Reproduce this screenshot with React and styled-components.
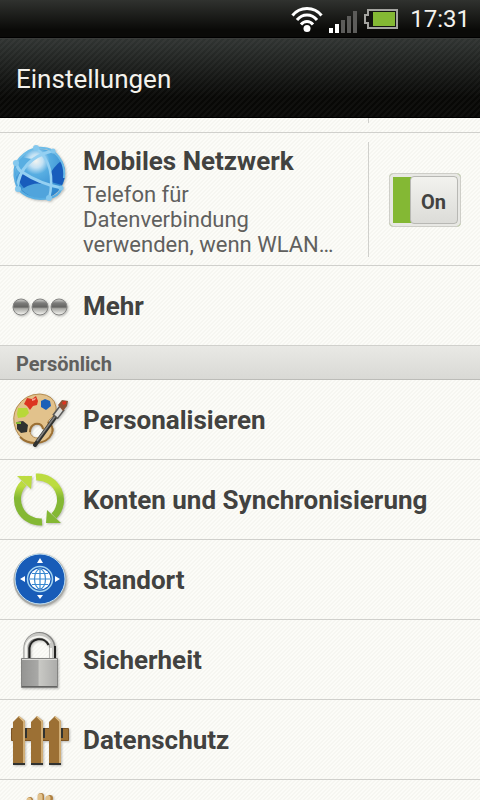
import React, { useState } from 'react';
import styled, { createGlobalStyle } from 'styled-components';

const GlobalStyle = createGlobalStyle`
  * {
    box-sizing: border-box;
  }
  body {
    margin: 0;
    background: #fbfbf7;
    font-family: Roboto, sans-serif;
  }
`;

const Screen = styled.div`
  display: flex;
  flex-direction: column;
  height: 100vh;
  overflow: hidden;
  color: #424240;
  background: linear-gradient(135deg, #fcfcf8 25%, #f6f6f1 25% 50%, #fcfcf8 50% 75%, #f6f6f1 75%);
  background-size: 4px 4px;
`;

const StatusBar = styled.div`
  display: flex;
  flex: none;
  align-items: center;
  justify-content: flex-end;
  gap: 6px;
  height: 38px;
  padding: 0 10px;
  background: linear-gradient(#30322f, #0a0a08 80%);
  border-bottom: 1px solid #000;
`;

const Clock = styled.time`
  margin-left: 6px;
  font-size: 24px;
  line-height: 38px;
  color: #f4f2ec;
`;

const Header = styled.header`
  flex: none;
  height: 80px;
  padding: 0 16px;
  border-top: 1px solid #3a3c3a;
  border-bottom: 1px solid #000;
  background:
    linear-gradient(135deg, transparent 25%, #ffffff08 25% 50%, transparent 50% 75%, #ffffff08 75%) 0 0 / 6px 6px,
    linear-gradient(#303432, #080806 75%);
`;

const PageTitle = styled.h1`
  margin: 0;
  font-size: 26px;
  font-weight: 400;
  line-height: 80px;
  color: #f4f2ec;
`;

const List = styled.ul`
  margin: 0;
  padding: 0;
  list-style: none;
`;

const Item = styled.li`
  display: flex;
  border-bottom: 1px solid #d0d0cc;
`;

// bottom edge of the row that is scrolled under the header
const ScrolledItem = styled(Item)`
  justify-content: flex-end;
  height: 15px;
  padding: 0 111px 9px 0;

  &::before {
    content: '';
    width: 1px;
    background: #d0d0cc;
  }
`;

const ItemLink = styled.a`
  display: flex;
  flex: 1;
  gap: 15px;
  align-items: ${(props) => (props.$tall ? 'flex-start' : 'center')};
  min-width: 0;
  padding: ${(props) => (props.$tall ? '12px 12px 8px' : '12px 12px 11px')};
  color: inherit;
  text-decoration: none;
`;

const Icon = styled.svg`
  flex: none;
  width: 56px;
  height: 56px;
  overflow: visible;
  filter: drop-shadow(1px 1px 1px #00000040);
`;

const ItemTitle = styled.div`
  font-size: 26px;
  font-weight: 700;
  line-height: 32px;
`;

const ItemText = styled.div`
  margin-top: 5px;
  font-size: 22px;
  line-height: 25px;
  color: #60605e;
`;

const SectionTitle = styled.h2`
  height: 34px;
  margin: 0;
  padding: 0 16px;
  border-bottom: 1px solid #bcbcb8;
  background: linear-gradient(#e9e9e5, #d9d9d5);
  font-size: 20px;
  font-weight: 700;
  line-height: 36px;
  color: #60605e;
`;

const SwitchCell = styled.div`
  display: flex;
  align-items: center;
  justify-content: center;
  width: 112px;
  margin: 9px 0 8px;
  border-left: 1px solid #d0d0cc;
`;

const Switch = styled.label`
  position: relative;
  display: flex;
  justify-content: ${(props) => (props.$on ? 'flex-end' : 'flex-start')};
  width: 72px;
  height: 54px;
  padding: 2px;
  border: 1px solid #cecec8;
  border-radius: 4px;
  background: ${(props) => (props.$on ? '#84b834' : '#c8c8c4')};
  box-shadow: inset 0 0 0 3px #e8e8e4;
`;

const SwitchInput = styled.input`
  position: absolute;
  inset: 0;
  width: 100%;
  height: 100%;
  margin: 0;
  opacity: 0;
`;

const SwitchKnob = styled.span`
  width: 48px;
  border: 1px solid #b8b8b4;
  border-radius: 4px;
  background: linear-gradient(#f2f2ee, #dcdcd8);
  font-size: 20px;
  font-weight: 700;
  line-height: 50px;
  text-align: center;
`;

const WifiIcon = () => (
  <svg width="32" height="26" viewBox="0 0 32 26" fill="none" stroke="#fff" strokeWidth="3">
    <path d="M1.5 9.5Q7 2.500 16 2.500T30.500 9.500" />
    <path d="M6 14Q10 9 16 9T26 14" />
    <path d="M10 18.500Q12.500 15.500 16 15.500T22 18.500" />
    <circle cx="16" cy="22.500" r="3.500" fill="#fff" stroke="none" />
  </svg>
);

const SignalIcon = () => (
  <svg width="29" height="28" viewBox="0 0 29 28">
    <path fill="#fff" d="M0 23h4v5H0zM6 19h4v9H6z" />
    <path fill="#5c5c5a" d="M12 15h4v13h-4zM18 11h4v17h-4zM24 6h4v22h-4z" />
  </svg>
);

const BatteryIcon = () => (
  <svg width="34" height="20" viewBox="0 0 34 20">
    <path fill="#141412" stroke="#a4a4a0" strokeWidth="2" d="M4 1h29v18H4v-5H1V6h3z" />
    <path fill="#84b834" d="M9 3h22v14H9z" />
  </svg>
);

const GlobeIcon = () => (
  <Icon viewBox="0 0 56 56">
    <defs>
      <radialGradient id="globe" cx="42%" cy="24%" r="75%">
        <stop offset="0" stopColor="#f4f4f0" />
        <stop offset="0.18" stopColor="#c4e2f4" />
        <stop offset="0.36" stopColor="#58aee2" />
        <stop offset="1" stopColor="#2c84cc" />
      </radialGradient>
    </defs>
    <circle cx="28" cy="29" r="25" fill="url(#globe)" />
    <path fill="#185cbc" d="M39 27Q46 17 50 16Q56 28 50 40L39 37zM8 27L30 39Q22 44 14 45Q3 35 8 27z" />
    <path fill="#50a4dc" d="M12 43Q24 35 38 41L37 54Q20 56 9 44z" />
    <path fill="#58aee2" d="M8 12Q3 20 4 32L12 22L20 14z" />
    <g fill="none" stroke="#94d0f2" strokeWidth="3">
      <path d="M5 44Q8 14 40 6" />
      <path d="M4 18Q6 25 10 27Q28 39 50 43" />
      <path d="M24 3Q45 20 37 54" strokeWidth="2.500" />
      <path d="M4 18Q11 7 24 3Q34 2 41 6Q54 17 52 33" stroke="#6cbce8" strokeWidth="2" />
      <path d="M4 18Q0 30 6 44Q18 57 37 53Q46 52 50 43" stroke="#58aee2" strokeWidth="2" />
    </g>
    <g fill="#84c8ee">
      <circle cx="24" cy="3" r="3" />
      <circle cx="4" cy="18" r="3" />
      <circle cx="6" cy="44" r="3" />
      <circle cx="37" cy="53" r="3" />
      <circle cx="49" cy="43" r="2.500" />
      <circle cx="41" cy="6" r="2.500" />
    </g>
  </Icon>
);

const MoreIcon = () => (
  <Icon viewBox="0 0 56 56">
    <defs>
      <linearGradient id="ball" x2="0" y2="1">
        <stop offset="0" stopColor="#dcdcd8" />
        <stop offset="0.25" stopColor="#7c7c7a" />
        <stop offset="0.5" stopColor="#646462" />
        <stop offset="0.6" stopColor="#a8a8a4" />
        <stop offset="1" stopColor="#fafaf6" />
      </linearGradient>
    </defs>
    <g fill="url(#ball)" stroke="#848482">
      <circle cx="9" cy="29" r="8" />
      <circle cx="28" cy="29" r="8" />
      <circle cx="47" cy="29" r="8" />
    </g>
  </Icon>
);

const PaletteIcon = () => (
  <Icon viewBox="0 0 56 56">
    <path
      fill="#e2c28c"
      stroke="#b48c50"
      fillRule="evenodd"
      d="M28 2Q42 3 44 15Q45 22 37 28Q34 32 38 33Q43 35 40 42Q36 51 23 51Q10 51 4 38Q-1 25 5 15Q13 2 28 2zM25 32a7 7 0 1 0 .1 0z"
    />
    <path fill="none" stroke="#9c7034" strokeWidth="2" d="M36 30Q42 34 40 41Q36 51 23 51Q14 51 8 45M31 37Q30 31 23 32Q18 34 18 40" />
    <path fill="#dc3420" d="M15 6l5 1 4-3 2 5-1 4-4 1-3 4-3-4-3-2z" />
    <path fill="#f4a494" d="M20 7l4-1-1 2-3 1z" />
    <path fill="#1c60b8" d="M29 9l4-2 5 2 1 5-5 4-5-3z" />
    <path fill="#b8d838" d="M6 16h9l2 5-4 4-7 1-1-4z" />
    <path fill="#303230" d="M5 30l6-1 5 4-1 7-6 1-4-4z" />
    <path fill="#84b834" d="M4 30h5v2H4z" />
    <path stroke="#303230" strokeWidth="4" strokeLinecap="round" d="M23 53L44 24" />
    <path stroke="#848482" strokeWidth="1.500" d="M25 49L44 23" />
    <path stroke="#585856" strokeWidth="7" d="M43 25l7-9" />
    <path stroke="#dcdcd8" strokeWidth="4" d="M44 24l6-8" />
    <path fill="#8c5438" d="M46 13l4-5 6 1-1 5-4 5z" />
    <path fill="#dc3420" d="M50 10l4-1v3l-3 1z" />
  </Icon>
);

const SyncIcon = () => (
  <Icon viewBox="0 0 56 56">
    <defs>
      <linearGradient id="sync" gradientUnits="userSpaceOnUse" x1="0" y1="14" x2="0" y2="26">
        <stop offset="0" stopColor="#bcdc40" />
        <stop offset="1" stopColor="#84b834" />
      </linearGradient>
    </defs>
    <g fill="none" stroke="url(#sync)" strokeWidth="7">
      <path d="M30 50A23 23 0 0 1 12 11" />
      <path d="M24 5A23 23 0 0 1 42 44" />
    </g>
    <path fill="url(#sync)" d="M5 4h15l-1 13zM49 51H34l1-13z" />
  </Icon>
);

const LocationIcon = () => (
  <Icon viewBox="0 0 56 56">
    <circle cx="28" cy="28" r="26.500" fill="#a8a8a4" />
    <circle cx="28" cy="27" r="25" fill="#185cb8" stroke="#c0e0f4" />
    <circle cx="28" cy="27" r="12.500" fill="#185cb8" stroke="#a4d4f0" strokeWidth="1.500" />
    <circle cx="28" cy="27" r="10.500" fill="#fff" />
    <g fill="none" stroke="#3888d0" strokeWidth="1.200">
      <path d="M28 17v20M18 27h20M20 21.500h16M20 32.500h16" />
      <ellipse cx="28" cy="27" rx="5.500" ry="10" />
    </g>
    <path fill="#fff" d="M28 6l3 5h-6zM28 47l-3-4h6zM8 27l5-3v6zM48 27l-5-3v6z" />
  </Icon>
);

const LockIcon = () => (
  <Icon viewBox="0 0 56 56">
    <defs>
      <linearGradient id="lock">
        <stop offset="0" stopColor="#949492" />
        <stop offset="0.45" stopColor="#a8a8a6" />
        <stop offset="0.5" stopColor="#c8c8c4" />
        <stop offset="1" stopColor="#acacaa" />
      </linearGradient>
    </defs>
    <g fill="none">
      <path stroke="#848482" strokeWidth="6" d="M14.500 27V16a13 13 0 0 1 26 0V27" />
      <path stroke="#c8c8c4" strokeWidth="4" d="M14 27V16a13 13 0 0 1 26 0V27" />
      <path stroke="#f4f4f0" strokeWidth="2" d="M14 27V14a13 12 0 0 1 24 -3M39 26V16" />
      <path stroke="#242422" strokeWidth="2" d="M17.500 27V16a10 10 0 0 1 19 -3M43 26V14" />
    </g>
    <path fill="url(#lock)" stroke="#848482" d="M9.500 26.500h36v29h-36z" />
    <path stroke="#dcdcd8" d="M10 27.500h35" />
    <path stroke="#646462" d="M10 54.500h35" />
  </Icon>
);

const FenceIcon = () => (
  <Icon viewBox="0 0 56 56">
    <path fill="#9c7034" stroke="#7c5424" d="M-.5 16.500h57v12h-57z" />
    <path fill="#303230" d="M12 16h3v10h-3zM30 16h3v10h-3zM48 16h3v10h-3z" />
    {[1, 19, 37].map((x) => (
      <g key={x} transform={`translate(${x} 0)`}>
        <path fill="#9c7034" d="M0 10l6-6 6 5v44H0z" />
        <path fill="none" stroke="#e2c28c" strokeWidth="1.500" d="M6 4.500l5 5V51" />
        <path fill="#303230" d="M0 51h12v2H0z" />
      </g>
    ))}
  </Icon>
);

const HandIcon = () => (
  <Icon viewBox="0 0 56 56">
    <path
      fill="none"
      stroke="#b08040"
      strokeWidth="6"
      strokeLinecap="round"
      d="M18 8l5 22M29 4v24M38 6l-3 22M46 16l-7 18"
    />
    <path
      fill="none"
      stroke="#e2c28c"
      strokeWidth="5"
      strokeLinecap="round"
      d="M17 8l5 22M28 4v24M36 6l-3 22M45 16l-7 18"
    />
    <path fill="#e2c28c" d="M19 26h21l-3 26H23L8 34z" />
  </Icon>
);

const personalItems = [
  { title: 'Personalisieren', icon: PaletteIcon },
  { title: 'Konten und Synchronisierung', icon: SyncIcon },
  { title: 'Standort', icon: LocationIcon },
  { title: 'Sicherheit', icon: LockIcon },
  { title: 'Datenschutz', icon: FenceIcon },
];

const App = () => {
  const [mobileData, setMobileData] = useState(true);

  return (
    <>
      <GlobalStyle />
      <Screen>
        <StatusBar>
          <WifiIcon />
          <SignalIcon />
          <BatteryIcon />
          <Clock>17:31</Clock>
        </StatusBar>
        <Header>
          <PageTitle>Einstellungen</PageTitle>
        </Header>
        <main>
          <List>
            <ScrolledItem />
            <Item>
              <ItemLink href="#mobile" $tall>
                <GlobeIcon />
                <div>
                  <ItemTitle id="mobile-title">Mobiles Netzwerk</ItemTitle>
                  <ItemText>Telefon für Datenverbindung verwenden, wenn WLAN…</ItemText>
                </div>
              </ItemLink>
              <SwitchCell>
                <Switch $on={mobileData}>
                  <SwitchInput
                    type="checkbox"
                    aria-labelledby="mobile-title"
                    checked={mobileData}
                    onChange={(e) => setMobileData(e.target.checked)}
                  />
                  <SwitchKnob>{mobileData ? 'On' : 'Off'}</SwitchKnob>
                </Switch>
              </SwitchCell>
            </Item>
            <Item>
              <ItemLink href="#more">
                <MoreIcon />
                <ItemTitle>Mehr</ItemTitle>
              </ItemLink>
            </Item>
          </List>
          <SectionTitle>Persönlich</SectionTitle>
          <List>
            {personalItems.map(({ title, icon: ItemIcon }) => (
              <Item key={title}>
                <ItemLink href={`#${title}`}>
                  <ItemIcon />
                  <ItemTitle>{title}</ItemTitle>
                </ItemLink>
              </Item>
            ))}
            <Item>
              <ItemLink href="#next">
                <HandIcon />
              </ItemLink>
            </Item>
          </List>
        </main>
      </Screen>
    </>
  );
};

export default App;
